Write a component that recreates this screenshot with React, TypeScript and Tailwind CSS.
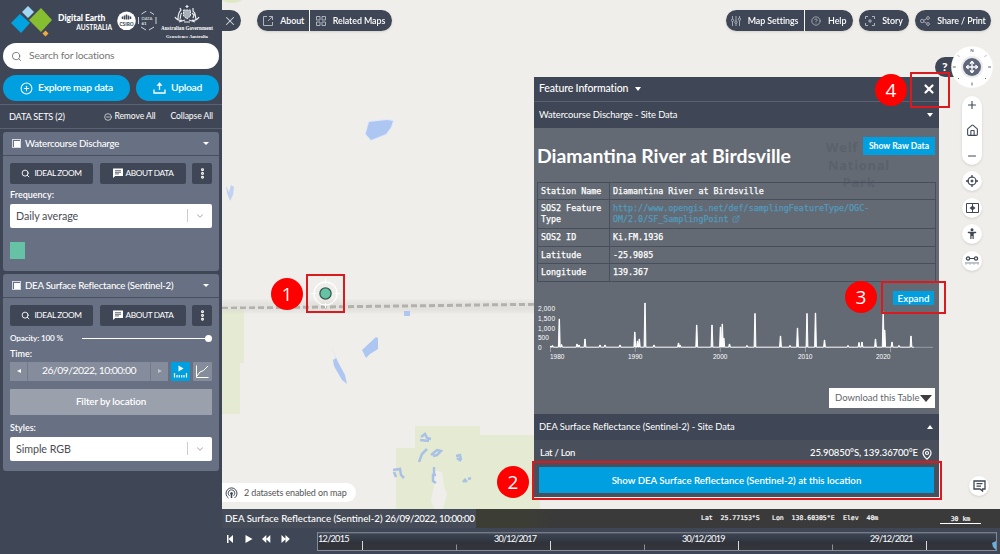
import React from "react";
import {
  ChevronDown, CirclePlus, CircleMinus, EllipsisVertical, ExternalLink, House,
  MapPin, Minus, Move, Plus, Search, X, CircleHelp,
} from "lucide-react";

function MapCanvas() {
  return (
    <svg className="absolute inset-0 h-full w-full" viewBox="222 0 778 509">
      <defs>
        <filter id="soft"><feGaussianBlur stdDeviation="0.6" /></filter>
        <filter id="softer"><feGaussianBlur stdDeviation="2.5" /></filter>
      </defs>
      <rect x="222" width="778" height="509" fill="#efeeea" />
      <ellipse cx="232" cy="-2" rx="11" ry="5" fill="#dfe8c4" filter="url(#soft)" />
      <g filter="url(#soft)">
        <path d="M222 309h22v54h-4v51h-18z" fill="#e5ebd2" />
        <path d="M415 426h65v9h60v74H396v-61h19z" fill="#e5ebd2" />
        <path d="M434 470l8 2 2 14 3 8-4 15h-9l-3-9 3-14z" fill="#efeeea" />
      </g>
      <rect x="216" y="301" width="324" height="11" fill="#d5d3cf" opacity="0.5" filter="url(#softer)" />
      <path d="M222 308.3L400 306 534 304.300" stroke="#b3b1ad" strokeWidth="3" strokeDasharray="6 3" fill="none" filter="url(#soft)" />
      <g fill="#aec6f2" filter="url(#soft)">
        <path d="M369 122l18-2 6 1-2 6-5 7-15 6-5.300-6z" stroke="#e0e9f8" strokeWidth="2" paintOrder="stroke" />
        <path d="M362 350l14-13 2 1v11l-8 5-4 4z" />
        <path d="M331 346l7 16 7 13 2 9-5-4-8-14-1-6 3-2z" />
        <path d="M404 311h6v5h-6z" />
        <path d="M226 186l3 6 2-7 3 2-1 8-3 6-3-8z" opacity=".7" />
      </g>
      <g stroke="#aac1e6" strokeWidth="2.500" fill="none" filter="url(#soft)">
        <path d="M421 437l4-3 2 4 4 1M420 440l9 1" />
        <path d="M427 449l-5 5-3 8" />
        <path d="M431 455l6-5 4 1-4 4-4 1" />
        <path d="M456 456l4-1 1 5M457 458l4 3" />
        <path d="M393 470l7-1 1 6 3 3M394 472l2 5" />
        <path d="M434 467v7M436 475h-3v6l3 2" />
        <path d="M463 482l3-3M468 479l3-1M464 479l3 3" />
      </g>
      <g stroke="#fff" fill="none">
        <circle cx="325.500" cy="293.500" r="11.500" strokeWidth="1.300" />
        <path d="M325.500 279v5M325.500 303v5M311 293.500h5M335 293.500h5" />
      </g>
      <circle cx="325.500" cy="293.500" r="5.600" fill="#66c2a5" stroke="#34584f" strokeWidth="1.300" />
    </svg>
  );
}

function Logos() {
  return (
    <div className="flex h-[43px] shrink-0 items-start pl-[11px] text-white">
      <svg className="mt-[5px] h-[32px] w-[43px] shrink-0" viewBox="0 0 43 32">
        <path d="M0 18l9-9 10 9-9 10z" fill="#00a3df" />
        <path d="M11 7l6-6 6 6-6 6z" fill="#a3d8f4" />
        <path d="M18 15L30 3l11 12-11 12z" fill="#87bd31" />
        <path d="M31.500 28.500l3-3 3 3-3 3z" fill="#f2aa3c" />
      </svg>
      <div className="ml-[4px] mt-[14px] w-[54px] shrink-0 leading-[8.500px]">
        <div className="whitespace-nowrap text-[8.500px] font-black tracking-[-0.020px]">Digital Earth</div>
        <div className="text-right text-[6.600px] font-bold">AUSTRALIA</div>
      </div>
      <svg className="ml-[5px] mt-[11px] h-[20px] w-[40px] shrink-0" viewBox="0 0 40 20">
        <circle cx="9.500" cy="9.800" r="9.300" fill="#fff" />
        <path d="M5.500 8V5.500M7.500 8.500V4.500M9.500 8.500V3.500M11.500 8.500V4.500M13.500 8V5.500" stroke="#444b58" strokeWidth="1.500" />
        <text x="9.500" y="14.700" textAnchor="middle" fontSize="4.800" fontWeight="900" fill="#444b58">CSIRO</text>
        <path d="M21.500 6v7M39 6v7M24.500 3l5-3M33 1l4 2.500M24 16l5 3M32 19l5-3" stroke="#cfd2d8" strokeWidth="1" fill="none" />
        <text x="24.500" y="9" fontSize="4.300" fill="#e5e7eb">DATA</text>
        <text x="24.500" y="13.800" fontSize="4.500" fontWeight="700" fill="#e5e7eb">61</text>
      </svg>
      <div className="ml-[4px] mt-[5px] flex w-[52px] shrink-0 flex-col items-center font-['Liberation_Serif',serif] font-bold">
        <svg className="h-[18px] w-[28px]" viewBox="0 0 28 18" fill="none" stroke="#e9ebee" strokeWidth="1.200">
          <path d="M14 0v3M12.500 1.500h3" />
          <path d="M10.500 5h7v6l-3.500 3-3.500-3z" fill="#aab0b9" strokeWidth="1" strokeDasharray="2 .7" />
          <path d="M9 15C6 16 3 14 2 12M5 14c0-4 1-7 3-9l-1-2M7 14c1-3 0-5 2-6M19 15c3 1 6-1 7-3M23 14c-1-3 0-6-3-8V3M20 13l1-3-2-2M6 17l6-2M22 17l-6-2M11 17h6" />
        </svg>
        <div className="mt-[2px] whitespace-nowrap text-[5.100px] leading-[7px]">Australian Government</div>
        <div className="mt-[1px] whitespace-nowrap text-[4.700px] leading-[7px]">Geoscience Australia</div>
      </div>
    </div>
  );
}

function CardHeader({ title }: { title: string }) {
  return (
    <div className="flex h-[24px] shrink-0 items-center border-b border-[#495161] pl-[9px] pr-[10px]">
      <span className="mr-[4px] flex size-[9px] items-center justify-center border border-[#d5d9e0]">
        <span className="size-[6px] bg-white" />
      </span>
      <span className="whitespace-nowrap text-[9.700px] font-medium tracking-[-0.250px]">{title}</span>
      <span className="ml-auto h-0 w-0 border-x-[3px] border-t-[3.500px] border-x-transparent border-t-white" />
    </div>
  );
}

function CardActions() {
  return (
    <div className="flex h-[20.500px] shrink-0 text-[8.300px] tracking-[-0.380px]">
      <button className="mr-[7px] flex w-[83px] items-center justify-center gap-[4px] rounded-[2px] bg-[#3f4756]">
        <Search size={9} strokeWidth={2.400} />IDEAL ZOOM
      </button>
      <button className="mr-[6px] flex w-[86px] items-center justify-center gap-[3px] rounded-[2px] bg-[#3f4756]">
        <svg width="10" height="10" viewBox="0 0 10 10"><path d="M0 .5h10v7.500H2.300L0 10z" fill="#fff" /><path d="M2 2.700h6M2 4.300h6M2 5.900h4" stroke="#3f4756" strokeWidth=".8" /></svg>
        ABOUT DATA
      </button>
      <button className="flex w-[20px] items-center justify-center rounded-[2px] bg-[#3f4756]">
        <EllipsisVertical size={13} strokeWidth={3.500} />
      </button>
    </div>
  );
}

function SelectBox({ value }: { value: string }) {
  return (
    <div className="flex h-[24.500px] shrink-0 items-center rounded-[2px] bg-white pl-[6px] pr-[7px] text-[10.700px] tracking-[-0.050px] text-[#4a4d55]">
      {value}
      <span className="ml-auto h-[13px] w-px bg-[#ccc]" />
      <ChevronDown className="ml-[7px] text-[#b5b5b5]" size={10} strokeWidth={2.500} />
    </div>
  );
}

function Sidebar() {
  return (
    <aside className="flex w-[222px] shrink-0 flex-col bg-[#3f4756] text-white">
      <Logos />
      <div className="mx-[3px] flex h-[26px] shrink-0 items-center rounded-full bg-white pl-[8px] text-[10.400px] tracking-[-0.220px] text-[#777]">
        <Search className="mr-[7px] text-[#666]" size={11} strokeWidth={1.800} />Search for locations
      </div>
      <div className="mx-[3px] mt-[6px] flex h-[26px] shrink-0 gap-[6px] text-[10.300px] font-semibold tracking-[-0.250px]">
        <button className="flex w-[127px] items-center justify-center gap-[5px] rounded-full bg-[#00a0e0]"><CirclePlus size={13} strokeWidth={1.900} />Explore map data</button>
        <button className="flex w-[83px] items-center justify-center gap-[5px] rounded-full bg-[#00a0e0]">
          <svg width="13" height="12" viewBox="0 0 13 12" fill="none" stroke="#fff" strokeWidth="1.300"><path d="M1 7.500v3.500h11V7.500M6.500 8V2" /><path d="M4 3.500L6.500.5 9 3.500z" fill="#fff" strokeWidth=".5" /></svg>Upload
        </button>
      </div>
      <div className="mt-[3px] flex h-[25px] shrink-0 items-center border-y border-[#596173] pl-[9px] pr-[9px] text-[8.600px] tracking-[-0.100px]">
        <span className="text-[9.200px] tracking-[-0.220px]">DATA SETS (2)</span>
        <CircleMinus className="ml-auto mr-[2px]" size={8} /><span>Remove All</span><span className="ml-[15px]">Collapse All</span>
      </div>
      <section className="mx-[3px] mt-[3px] flex h-[139px] shrink-0 flex-col rounded-[3px] bg-[#687083]">
        <CardHeader title="Watercourse Discharge" />
        <div className="flex flex-col px-[7px] pt-[7px]">
          <CardActions />
          <div className="mt-[2px] h-[18px] text-[9px] font-semibold leading-[17px]">Frequency:</div>
          <SelectBox value="Daily average" />
          <span className="mt-[14px] h-[17px] w-[14.500px] bg-[#66c2a5]" />
        </div>
      </section>
      <section className="mx-[3px] mt-[3px] flex h-[197px] shrink-0 flex-col rounded-[3px] bg-[#687083]">
        <CardHeader title="DEA Surface Reflectance (Sentinel-2)" />
        <div className="flex flex-col px-[7px] pt-[7px]">
          <CardActions />
          <div className="mt-[5px] flex h-[15px] items-center text-[8.200px] font-semibold tracking-[-0.180px]">
            <span className="w-[72px]">Opacity: 100 %</span><span className="h-px flex-1 bg-white" /><span className="size-[7px] rounded-full bg-white" />
          </div>
          <div className="h-[16px] text-[9px] font-semibold leading-[15px]">Time:</div>
          <div className="flex h-[19px]">
            <div className="flex w-[158px] bg-[#858c9b] text-[10.400px]">
              <span className="flex w-[18px] items-center justify-center border-r border-[#737b8b]"><span className="border-y-[2.500px] border-r-[4px] border-y-transparent border-r-white" /></span>
              <span className="flex flex-1 items-center justify-center tracking-[-0.500px]">26/09/2022, 10:00:00</span>
              <span className="flex w-[18px] items-center justify-center border-l border-[#737b8b]"><span className="border-y-[2.500px] border-l-[4px] border-y-transparent border-l-[#bfc4cc]" /></span>
            </div>
            <svg className="ml-[3px]" width="19" height="19" viewBox="0 0 19 19"><rect width="19" height="19" rx="1" fill="#00a0e0" /><path d="M7.500 3.500l5 3-5 3z" fill="#fff" /><path d="M3.500 11v4.500M6 13v2.500M8.300 13v2.500M10.700 13v2.500M13 13v2.500M15.500 11v4.500" stroke="#fff" strokeWidth="1.200" /></svg>
            <svg className="ml-[3px]" width="19" height="19" viewBox="0 0 19 19" fill="none" stroke="#fff"><rect width="19" height="19" rx="1" fill="#858c9b" stroke="none" /><path d="M3.500 3.500v12h12M4 14l3-4 3.500-1.500L15 4" strokeWidth="1" /></svg>
          </div>
          <button className="mt-[8px] h-[26px] rounded-[1px] bg-[#9ba1ac] text-[9.900px] font-semibold tracking-[-0.150px]">Filter by location</button>
          <div className="mt-[4px] h-[18px] text-[9px] font-semibold leading-[18px]">Styles:</div>
          <SelectBox value="Simple RGB" />
        </div>
      </section>
    </aside>
  );
}

function MapButton({ icon, label, className }: { icon: React.ReactNode; label: string; className: string }) {
  return <button className={"flex h-[21px] items-center justify-center gap-[7px] bg-[#3f4756] text-[8.900px] font-semibold tracking-[-0.070px] text-white shadow-sm " + className}>{icon}<span className="whitespace-nowrap">{label}</span></button>;
}

function TopBar() {
  return (
    <div className="absolute inset-x-0 top-[10px] flex pr-[9px]">
      <button className="flex h-[21px] w-[19px] items-center justify-center rounded-r-full bg-[#3f4756] pr-[3px] text-[#d5d9df]"><X size={14} strokeWidth={1.800} /></button>
      <MapButton className="ml-[16px] w-[52.500px] rounded-l-full border-r border-r-white pl-[2px]" label="About" icon={<svg width="10" height="10" viewBox="0 0 10 10" fill="none" stroke="#aeb4be"><path d="M4 .5H.5v9h9V6M6 .5h3.500V4M9.500.5L5 5" /></svg>} />
      <MapButton className="w-[82px] rounded-r-full" label="Related Maps" icon={<svg width="10" height="10" viewBox="0 0 10 10" fill="none" stroke="#aeb4be"><path d="M.5.5H4V4H.5zM6 .5h3.500V4H6zM.5 6H4v3.500H.5zM6 6h3.500v3.500H6z" /></svg>} />
      <MapButton className="ml-auto w-[79px] rounded-l-full border-r border-r-white" label="Map Settings" icon={<svg width="10" height="10" viewBox="0 0 10 10" fill="none" stroke="#aeb4be" strokeWidth=".9"><path d="M1.500 0v3M1.500 5.500V10M5 0v5M5 7.500V10M8.500 0v2M8.500 4.500V10" /><circle cx="1.500" cy="4.300" r="1.200" /><circle cx="5" cy="6.300" r="1.200" /><circle cx="8.500" cy="3.200" r="1.200" /></svg>} />
      <MapButton className="w-[48.500px] rounded-r-full" label="Help" icon={<CircleHelp size={10} color="#aeb4be" />} />
      <MapButton className="ml-[6px] w-[50px] rounded-full" label="Story" icon={<svg width="10" height="10" viewBox="0 0 10 10" fill="none" stroke="#aeb4be"><path d="M.5 3V.5H3M7 .5h2.500V3M9.500 7v2.500H7M3 9.500H.5V7M5 3v4M3 5h4" /></svg>} />
      <MapButton className="ml-[6px] w-[76px] rounded-full" label="Share / Print" icon={<svg width="10" height="10" viewBox="0 0 10 10" fill="none" stroke="#aeb4be" strokeWidth=".9"><circle cx="2.200" cy="5" r="1.700" /><circle cx="8" cy="2" r="1.400" /><circle cx="8" cy="8" r="1.400" /><path d="M3.800 4.300L6.700 2.700M3.800 5.700l2.900 1.600" /></svg>} />
    </div>
  );
}

const roundTool = "flex size-[20px] items-center justify-center rounded-full bg-white shadow-sm";

function MapTools() {
  return (
    <>
      <div className="absolute left-[713px] top-[57px] flex h-[20px] w-[30px] items-center rounded-l-full bg-[#3f4756] pl-[7px] text-[12px] font-black text-white">?</div>
      <div className="absolute right-[7px] top-[46px] flex w-[42px] flex-col items-center text-[#3f4756]">
        <svg width="42" height="42" viewBox="0 0 42 42">
          <circle cx="21" cy="21" r="20.800" fill="#fff" />
          <circle cx="21" cy="21" r="11" fill="#ececec" /><circle cx="21" cy="21" r="9" fill="#5f687b" />
          <path d="M1.800 21h3M37 21h3M21 36.500v3M7 9.500l1 1M35 9.500l-1 1M7 33l1-1M35 33l-1-1" stroke="#626a7b" />
          <text x="21" y="6" textAnchor="middle" fontSize="4.500" fontWeight="700" fill="#68707f">N</text>
          <Move x="14.500" y="14.500" width={13} height={13} color="#fff" strokeWidth={2.400} />
        </svg>
        <div className="mt-[8px] flex h-[69px] w-[20px] flex-col items-center justify-between rounded-full bg-white py-[3px] shadow-sm">
          <Plus size={12} strokeWidth={2.200} /><House size={13} strokeWidth={2} /><Minus size={12} strokeWidth={2.200} />
        </div>
        <div className="mt-[6px] flex flex-col gap-[6.700px]">
          <span className={roundTool}><svg width="12" height="12" viewBox="0 0 12 12" fill="none" stroke="#3f4756"><circle cx="6" cy="6" r="4" strokeWidth="1.200" /><circle cx="6" cy="6" r="1" fill="#3f4756" /><path d="M6 0v3M6 9v3M0 6h3M9 6h3" strokeWidth="1.300" /></svg></span>
          <span className={roundTool}><svg width="13" height="10" viewBox="0 0 13 10" fill="none" stroke="#3f4756"><path d="M.5.5h12v9H.5zM6.500 1v8" /><path d="M3.500 5L6 3v4zM9.500 5L7 3v4z" fill="#3f4756" stroke="none" /></svg></span>
          <span className={roundTool}><svg width="10" height="12" viewBox="0 0 10 12" fill="#3f4756"><circle cx="5" cy="1.800" r="1.500" /><path d="M.8 3.700h8.400v1.300L6.700 5.500V11H5.500V8h-1v3H3.300V5.500L.8 5z" /></svg></span>
          <span className={roundTool}><svg width="14" height="10" viewBox="0 0 14 10" fill="none" stroke="#3f4756"><circle cx="3" cy="2.500" r="1.600" strokeWidth="1.300" /><circle cx="11" cy="2.500" r="1.600" strokeWidth="1.300" /><path d="M4.600 2.500h4.800" /><path d="M1 6v2.500M3 6v1.800M5 6v2.500M7 6v1.800M9 6v2.500M11 6v1.800M13 6v2.500" strokeWidth=".7" /></svg></span>
        </div>
      </div>
      <div className="absolute right-[11px] top-[476px]"><span className={roundTool}><svg width="13" height="12" viewBox="0 0 13 12" fill="none" stroke="#3f4756" strokeWidth="1.300"><path d="M1 1h11v8H9.500v2L7 9H1zM3.500 3.700h6M3.500 6.200h4.500" /></svg></span></div>
      <div className="absolute left-0 top-[483px] flex h-[19px] w-[134px] items-center rounded-r-full bg-white pl-[3px] text-[9px] text-[#555]">
        <svg className="mr-[6px]" width="13" height="12" viewBox="0 0 13 12" fill="none" stroke="#3f4756"><path d="M3.500 11A5.500 5.500 0 1 1 9.500 11M4.500 8.800A3.300 3.300 0 1 1 8.500 8.800" /><circle cx="6.500" cy="6.500" r="1" fill="#3f4756" /><path d="M6.500 7v4" strokeWidth="1.500" /></svg>
        <span className="whitespace-nowrap tracking-[-0.120px]">2 datasets enabled on map</span>
      </div>
    </>
  );
}

const peaks: [number, number][] = [
  [551, 346], [552.500, 345.500], [559.300, 319], [561.500, 344.500], [577, 344], [579, 345], [585, 339], [600, 345], [605, 345], [620, 345], [634.800, 332], [637.500, 341], [639.300, 339],
  [645, 303], [654, 345], [678.500, 343], [680, 345], [696.700, 325], [712, 325], [720.500, 327], [722.300, 324], [723.800, 338], [729.500, 344], [747, 345.500], [755, 313.500],
  [780.500, 336], [790, 345.500], [797.500, 328], [807, 313.500], [815.500, 313], [824.500, 340], [848, 345.500], [859, 342.500], [862, 342], [875.500, 339], [883.200, 312], [884.700, 330], [892, 342], [899, 345.500], [911, 336],
];

function DischargeChart() {
  const line = "M550 347.2" + peaks.map(([x, y]) => `L${x - 0.9} 347.2L${x - 0.2} ${y}L${x + 0.2} ${y}L${x + 0.9} 347.2`).join("") + "L914 347.2";
  return (
    <svg className="h-[66px] w-[405px]" viewBox="534 298 405 66" fill="#fff" fontFamily="'Liberation Sans',sans-serif" fontSize="6.500">
      <path d="M914 347.300h19M550.500 347v5M635.300 347v5M720.300 347v5M805.500 347v5M890.500 347v5" stroke="#a4a9b1" strokeWidth=".8" />
      <path d={line} fill="#fff" stroke="#fff" strokeWidth="1" strokeLinejoin="round" />
      <text x="538" y="311.200" textLength="17">2,000</text><text x="538" y="320.900" textLength="17">1,500</text>
      <text x="538" y="330.600" textLength="17">1,000</text><text x="538" y="340.100">500</text><text x="538" y="349.600">0</text>
      <text x="550" y="358.700">1980</text><text x="628" y="358.700">1990</text><text x="713" y="358.700">2000</text><text x="798" y="358.700">2010</text><text x="876" y="358.700">2020</text>
    </svg>
  );
}

function Row({ name, height, children }: { name: string; height: string; children: React.ReactNode }) {
  return (
    <div className={"flex border-b border-[#484f5c] " + height}>
      <div className="w-[72px] shrink-0 border-r border-[#484f5c] pl-[3px] pt-[3px]">{name}</div>
      <div className="whitespace-nowrap pl-[3px] pt-[3px]">{children}</div>
    </div>
  );
}

function FeaturePanel() {
  return (
    <section className="absolute left-[312px] top-[77px] flex h-[420px] w-[405px] flex-col bg-[#646a74] text-white">
      <header className="flex h-[25px] shrink-0 items-center border-b border-[#596173] bg-[#3f4756] pl-[5px] pr-[3px] text-[10.500px] font-medium tracking-[-0.140px]">
        Feature Information<span className="ml-[7px] border-x-[3.500px] border-t-[4px] border-x-transparent border-t-white" />
        <X className="ml-auto" size={14} strokeWidth={3.800} />
      </header>
      <div className="flex h-[26px] shrink-0 items-center bg-[#3f4756] pl-[5px] pr-[6px] text-[9.400px] tracking-[-0.100px]">
        Watercourse Discharge - Site Data<span className="ml-auto border-x-[3px] border-t-[4px] border-x-transparent border-t-white" />
      </div>
      <div className="relative flex h-[286px] shrink-0 flex-col">
        <div className="absolute left-[290px] top-[11px] flex w-[70px] flex-col font-['Open_Sans',sans-serif] text-[13px] font-bold leading-[17.500px] tracking-[0.700px] text-[#5a616b]">
          <span className="w-[34px] pl-[2px]">Welf</span><span className="text-center">National</span><span className="text-center">Park</span>
        </div>
        <div className="relative flex h-[54px] shrink-0 items-start pl-[3px] pr-[4px]">
          <h1 className="mt-[15px] whitespace-nowrap text-[19.400px] font-bold leading-[25px]">Diamantina River at Birdsville</h1>
          <button className="ml-auto mt-[9px] h-[18px] w-[72px] bg-[#00a0e0] text-[8.600px] font-bold">Show Raw Data</button>
        </div>
        <div className="relative mx-[3px] flex shrink-0 flex-col border-x border-t border-[#484f5c] font-['DejaVu_Sans_Mono',monospace] text-[8.350px] leading-[11px] [-webkit-text-stroke:0.25px]">
          <Row name="Station Name" height="h-[17px]">Diamantina River at Birdsville</Row>
          <Row name="SOS2 Feature Type" height="h-[29px]"><span className="text-[#519abd]">http://www.opengis.net/def/samplingFeatureType/OGC-<br />OM/2.0/SF_SamplingPoint<ExternalLink className="ml-[3px] inline align-[-1px]" size={8} strokeWidth={2.500} /></span></Row>
          <Row name="SOS2 ID" height="h-[18px]">Ki.FM.1936</Row>
          <Row name="Latitude" height="h-[17px]">-25.9085</Row>
          <Row name="Longitude" height="h-[18px]">139.367</Row>
        </div>
        <div className="mt-[16px] h-[66px] shrink-0"><DischargeChart /></div>
        <button className="absolute right-[5px] top-[163px] h-[14px] w-[41px] bg-[#00a0e0] text-[9.700px] font-semibold leading-[13px]">Expand</button>
        <div className="ml-auto mr-[4px] mt-[24px] flex h-[20px] w-[106px] shrink-0 items-center bg-white pl-[6px] text-[9.500px] text-[#62656b]">
          <span className="w-[85px] whitespace-nowrap">Download this Table</span><span className="shrink-0 border-x-[6px] border-t-[7px] border-x-transparent border-t-[#3d3d3d]" />
        </div>
      </div>
      <div className="flex h-[26px] shrink-0 items-center bg-[#3f4756] pl-[5px] pr-[6px] text-[9.400px] tracking-[-0.040px]">
        DEA Surface Reflectance (Sentinel-2) - Site Data<span className="ml-auto border-x-[3px] border-b-[4px] border-x-transparent border-b-white" />
      </div>
      <div className="flex flex-1 flex-col bg-[#4a505b] px-[5px]">
        <div className="flex h-[27px] items-center pl-[1px] pr-[1px] text-[9.500px] font-medium">
          <span className="tracking-[-0.250px]">Lat / Lon</span><span className="ml-auto mr-[3px] tracking-[-0.100px]">25.90850°S, 139.36700°E</span><MapPin size={12} strokeWidth={2.400} />
        </div>
        <button className="h-[26px] bg-[#00a0e0] text-[9.700px] font-semibold">Show DEA Surface Reflectance (Sentinel-2) at this location</button>
      </div>
    </section>
  );
}

function StatusBar() {
  return (
    <div className="flex h-[19px] shrink-0 items-center bg-[#3b3b3b] text-white">
      <div className="flex h-full w-[254px] shrink-0 items-center bg-[#454b57] pl-[3px] text-[9.700px] font-medium">
        <span className="whitespace-pre">DEA Surface Reflectance (Sentinel-2) </span><span className="whitespace-nowrap tracking-[-0.370px]">26/09/2022, 10:00:00</span>
      </div>
      <div className="flex h-full flex-1 items-center bg-linear-to-r from-[#3c3e36] from-10% to-[#3a3a3a] to-15% font-['DejaVu_Sans_Mono',monospace] text-[6.500px] [-webkit-text-stroke:0.2px]">
        <span className="ml-[225px] w-[71px] whitespace-pre">Lat  25.77153°S</span>
        <span className="w-[71px] whitespace-pre">Lon  138.60305°E</span>
        <span className="whitespace-pre">Elev  40m</span>
        <span className="ml-auto mr-[19px] mt-[1px] h-[9px] w-[41px] border-b border-white text-center leading-[8px]">30 km</span>
      </div>
    </div>
  );
}

function Timeline() {
  return (
    <div className="flex flex-1 items-start bg-[#3f4756] text-white">
      <svg className="mt-[5px] h-[12px] w-[95px] shrink-0" viewBox="222 533 95 12" fill="#fff">
        <path d="M227 535h1.500v8H227zM228.500 539l4.500-4v8zM245.500 535l7 4-7 4zM262 539l4.300-4v8zM266 539l4.300-4v8zM281.500 535l4.300 4-4.300 4zM285.500 535l4.300 4-4.300 4z" />
      </svg>
      <svg className="mt-[4px] h-[20px] w-[681px]" viewBox="317 532 681 20" fontSize="9.100" fill="#fff">
        <defs><linearGradient id="track" x1="0" x2="0" y1="0" y2="1"><stop offset="0" stopColor="#3e4656" /><stop offset=".45" stopColor="#323843" /><stop offset=".55" stopColor="#303339" /><stop offset="1" stopColor="#34363c" /></linearGradient></defs>
        <rect x="317.500" y="532.500" width="679" height="18" fill="url(#track)" stroke="#858b94" />
        <path d="M318 533h678" stroke="#666d79" />
        <path d="M362.500 541v9M550.500 541v9M738.500 541v9M926.500 541v9" stroke="#d6d8db" />
        <path d="M456.500 544.500v6M644.500 544.500v6M832.500 544.500v6" stroke="#8b9097" />
        <path d="M996 541l-4 2 1 4 3 3z" fill="#68aee0" />
        <text x="318" y="542" textLength="31.500">12/2015</text><text x="494" y="542" textLength="43">30/12/2017</text><text x="682" y="542" textLength="43.500">30/12/2019</text><text x="870" y="542" textLength="43.500">29/12/2021</text>
      </svg>
    </div>
  );
}

function Callout({ n, className }: { n: number; className: string }) {
  return <div className={"absolute flex size-[32px] items-center justify-center rounded-full bg-[#fe0000] font-['Open_Sans',sans-serif] text-[19px] leading-none text-white " + className}>{n}</div>;
}

export default function App() {
  return (
    <div className="relative flex h-[554px] w-[1000px] overflow-hidden font-['Lato',sans-serif]">
      <Sidebar />
      <main className="flex min-w-0 flex-1 flex-col">
        <div className="relative h-[509px] shrink-0">
          <MapCanvas />
          <TopBar />
          <MapTools />
          <FeaturePanel />
        </div>
        <StatusBar />
        <Timeline />
      </main>
      <div className="absolute left-[306px] top-[274px] h-[39px] w-[39px] border-2 border-[#d91a1e]" />
      <div className="absolute left-[532px] top-[461px] h-[39px] w-[410px] border-2 border-[#d91a1e]" />
      <div className="absolute left-[881px] top-[281px] h-[33px] w-[65px] border-2 border-[#d91a1e]" />
      <div className="absolute left-[910px] top-[72px] h-[36px] w-[40px] border-2 border-[#d91a1e]" />
      <Callout n={1} className="left-[271px] top-[278px]" />
      <Callout n={2} className="left-[497px] top-[466px]" />
      <Callout n={3} className="left-[845px] top-[281px]" />
      <Callout n={4} className="left-[875px] top-[74px]" />
    </div>
  );
}
